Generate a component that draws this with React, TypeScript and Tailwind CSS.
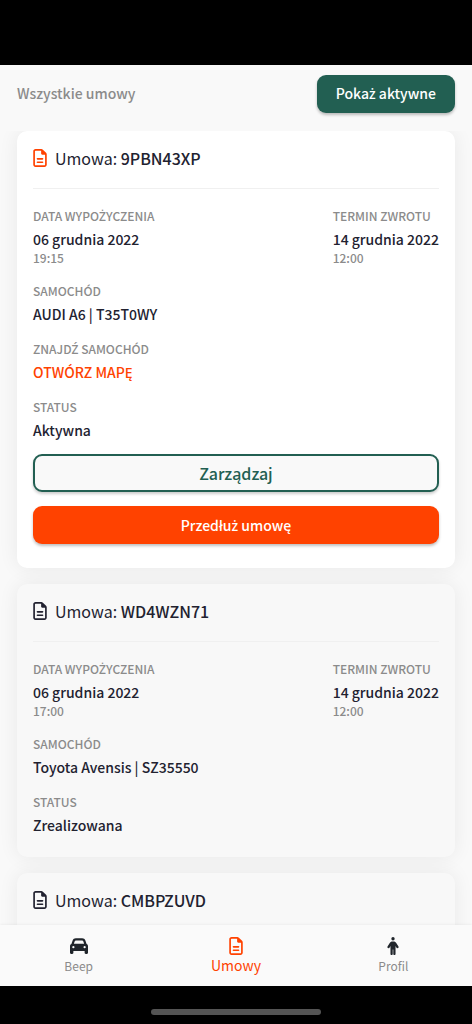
import { FaCar, FaPerson, FaRegFileLines } from "react-icons/fa6";
import clsx from "clsx";

type Rental = {
  id: string;
  active?: boolean;
  details?: {
    rentedAt: [string, string];
    dueAt: [string, string];
    car: string;
    status: string;
  };
};

const rentals: Rental[] = [
  {
    id: "9PBN43XP",
    active: true,
    details: {
      rentedAt: ["06 grudnia 2022", "19:15"],
      dueAt: ["14 grudnia 2022", "12:00"],
      car: "AUDI A6 | T35T0WY",
      status: "Aktywna",
    },
  },
  {
    id: "WD4WZN71",
    details: {
      rentedAt: ["06 grudnia 2022", "17:00"],
      dueAt: ["14 grudnia 2022", "12:00"],
      car: "Toyota Avensis | SZ35550",
      status: "Zrealizowana",
    },
  },
  { id: "CMBPZUVD" },
];

// The CJK family has no ż or ź, so those letters come from Noto Sans
function Polish({ text }: { text: string }) {
  return (
    <span>
      {text.split(/([żŻźŹ])/).map((part, i) =>
        i % 2 ? (
          <span key={i} className="font-['Noto_Sans',sans-serif] leading-none">
            {part}
          </span>
        ) : (
          part
        )
      )}
    </span>
  );
}

function Field({ label, time, children }: { label: string; time?: string; children: React.ReactNode }) {
  return (
    <div>
      <dt className="mb-[2px] text-[12px] leading-5 font-medium text-[#8b8b8b]">
        <Polish text={label} />
      </dt>
      <dd className="text-[14px] leading-[22px] font-medium">{children}</dd>
      {time && <dd className="pb-px text-[12px] leading-4 font-medium text-[#8b8b8b]">{time}</dd>}
    </div>
  );
}

function RentalCard({ rental }: { rental: Rental }) {
  const { id, active, details } = rental;

  return (
    <article
      className={clsx(
        "shrink-0 rounded-[10px] px-4 shadow-[0_0_20px_rgba(0,0,0,0.07)]",
        active ? "bg-white pb-6" : "bg-[#f8f8f8] pb-5"
      )}
    >
      {/* Title */}
      <h2 className="flex h-[58px] items-center gap-2 border-b border-[#f0f0f0] pb-[3px] text-[16px]">
        <FaRegFileLines className={clsx("h-[18px] w-[14px]", active && "text-[#ff4200]")} />
        <span>
          Umowa: <span className="font-medium">{id}</span>
        </span>
      </h2>

      {/* Details */}
      {details && (
        <dl className="flex flex-col gap-[14px] pt-[17px] pb-px">
          <div className="flex justify-between">
            <Field label="DATA WYPOŻYCZENIA" time={details.rentedAt[1]}>
              {details.rentedAt[0]}
            </Field>
            <Field label="TERMIN ZWROTU" time={details.dueAt[1]}>
              {details.dueAt[0]}
            </Field>
          </div>
          <Field label="SAMOCHÓD">{details.car}</Field>
          {active && (
            <Field label="ZNAJDŹ SAMOCHÓD">
              <a href="#mapa" className="text-[#ff4200]">
                OTWÓRZ MAPĘ
              </a>
            </Field>
          )}
          <Field label="STATUS">{details.status}</Field>
        </dl>
      )}

      {/* Actions */}
      {active && (
        <div className="mt-3 flex flex-col gap-[14px]">
          <button className="h-[38px] rounded-[9px] border-2 border-[#225f52] bg-[#f9f9f9] text-[16px] leading-none font-medium text-[#225f52] shadow-[0_2px_3px_rgba(0,0,0,0.2)]">
            Zarządzaj
          </button>
          <button className="h-[38px] rounded-[9px] bg-[#ff4200] text-[14px] font-medium text-white shadow-[0_2px_3px_rgba(0,0,0,0.25)]">
            <Polish text="Przedłuż umowę" />
          </button>
        </div>
      )}
    </article>
  );
}

export default function App() {
  return (
    <div className="flex h-screen flex-col bg-[#f9f9f9] font-['Noto_Sans_CJK_JP','Noto_Sans',sans-serif] text-[#222230]">
      {/* Status bar area */}
      <div className="h-[65px] shrink-0 bg-black" />

      <header className="flex h-[66px] shrink-0 items-center justify-between px-[17px] pb-[9px]">
        <h1 className="text-[14px] font-medium text-[#8b8b8b]">Wszystkie umowy</h1>
        <button className="h-[38px] rounded-[9px] bg-[#225f52] px-[19px] text-[14px] font-medium text-white shadow-[0_2px_3px_rgba(0,0,0,0.25)]">
          <Polish text="Pokaż aktywne" />
        </button>
      </header>

      <main className="flex min-h-0 flex-1 flex-col gap-4 overflow-y-auto px-[17px] pb-4 [scrollbar-width:none]">
        {rentals.map((rental) => (
          <RentalCard key={rental.id} rental={rental} />
        ))}
      </main>

      {/* Bottom navigation */}
      <nav className="relative grid h-[61px] shrink-0 grid-cols-3 bg-[#fafafa] text-[12px] text-[#8b8b8b] shadow-[0_0_3px_rgba(0,0,0,0.08)]">
        <a href="#beep" className="flex flex-col items-center pt-3">
          <FaCar className="size-[18px] text-[#20252b]" />
          <span className="leading-[22px]">Beep</span>
        </a>
        <a href="#umowy" className="flex flex-col items-center pt-3 text-[14px] text-[#ff4200]" aria-current="page">
          <FaRegFileLines className="h-[18px] w-[14px]" />
          <span className="leading-5">Umowy</span>
        </a>
        <a href="#profil" className="flex flex-col items-center pt-3">
          <FaPerson className="size-[18px] text-[#20252b]" />
          <span className="leading-[22px]">Profil</span>
        </a>
      </nav>

      {/* Home indicator */}
      <div className="flex h-[38px] shrink-0 items-end justify-center bg-black pb-[9px]">
        <div className="h-[6px] w-[36%] rounded-full bg-[#545454]" />
      </div>
    </div>
  );
}
